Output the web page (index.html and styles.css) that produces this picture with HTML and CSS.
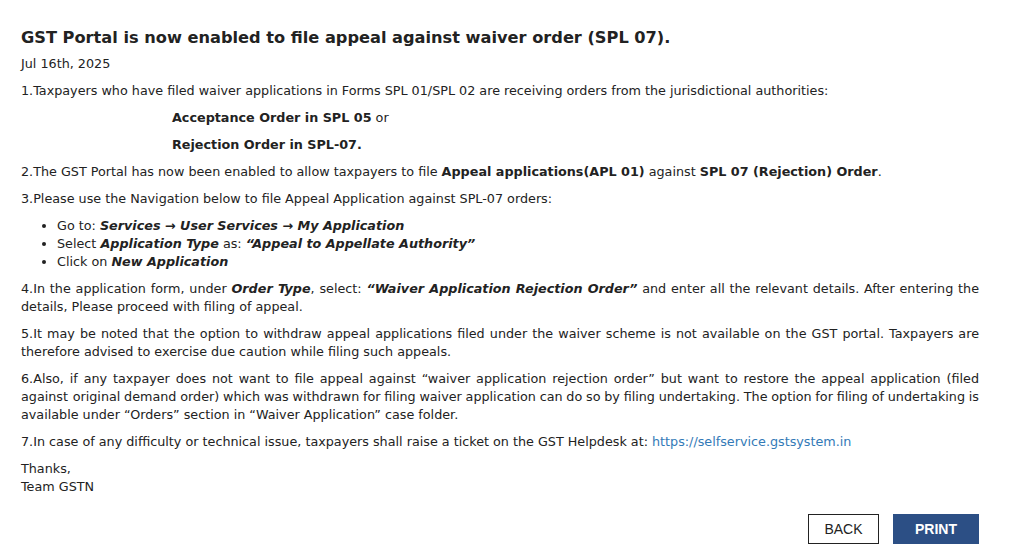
FILE: index.html
```html
<!DOCTYPE html>
<html lang="en">

<head>
  <meta charset="UTF-8">
  <meta name="viewport" content="width=device-width, initial-scale=1.0">
  <title>GST Portal - News</title>
  <link rel="stylesheet" href="styles.css">
</head>

<body>
  <div class="container">
    <h1 class="news-title">GST Portal is now enabled to file appeal against waiver order (SPL 07).</h1>
    <p class="news-date">Jul 16th, 2025</p>

    <div class="news-body">
      <p>1.Taxpayers who have filed waiver applications in Forms SPL 01/SPL 02 are receiving orders from the jurisdictional authorities:</p>
      <p class="indent"><b>Acceptance Order in SPL 05</b> or</p>
      <p class="indent"><b>Rejection Order in SPL-07.</b></p>
      <p>2.The GST Portal has now been enabled to allow taxpayers to file <b>Appeal applications(APL 01)</b> against <b>SPL 07 (Rejection) Order</b>.</p>
      <p>3.Please use the Navigation below to file Appeal Application against SPL-07 orders:</p>
      <ul class="steps">
        <li>Go to: <b><i>Services → User Services → My Application</i></b></li>
        <li>Select <b><i>Application Type</i></b> as: <b><i>“Appeal to Appellate Authority”</i></b></li>
        <li>Click on <b><i>New Application</i></b></li>
      </ul>
      <p class="justify">4.In the application form, under <b><i>Order Type</i></b>, select: <b><i>“Waiver Application Rejection Order”</i></b> and enter all the relevant details. After entering the details, Please proceed with filing of appeal.</p>
      <p class="justify">5.It may be noted that the option to withdraw appeal applications filed under the waiver scheme is not available on the GST portal. Taxpayers are therefore advised to exercise due caution while filing such appeals.</p>
      <p class="justify">6.Also, if any taxpayer does not want to file appeal against “waiver application rejection order” but want to restore the appeal application (filed against <span class="tight">original demand order) which was withdrawn for filing waiver application can do so by filing undertaking. The option for filing of undertaking is</span> available under “Orders” section in “Waiver Application” case folder.</p>
      <p>7.In case of any difficulty or technical issue, taxpayers shall raise a ticket on the GST Helpdesk at: <a href="#" class="link">https://selfservice.gstsystem.in</a></p>
      <p>Thanks,<br>Team GSTN</p>
    </div>

    <div class="actions">
      <button type="button" class="btn btn-back">BACK</button>
      <button type="button" class="btn btn-print">PRINT</button>
    </div>
  </div>
</body>

</html>
```

FILE: styles.css
```css
body {
  margin: 0;
  padding: 0;
  background-color: #fff;
  color: #222;
  font-family: Tahoma, "DejaVu Sans", sans-serif;
  font-size: 12.75px;
  line-height: 18px;
}

.container {
  width: 958px;
  padding: 0 0 0 21px;
}

.news-title {
  font-size: 16.2px;
  font-weight: bold;
  line-height: 24px;
  margin: 26px 0 5px 0;
}

.news-date {
  margin: 0 0 9px 0;
}

.news-body p {
  margin: 0 0 9px 0;
}

.news-body .indent {
  padding-left: 151px;
}

.news-body .justify {
  text-align: justify;
}

.news-body .tight {
  word-spacing: -0.9px;
}

.steps {
  margin: 0 0 9px 0;
  padding-left: 36px;
}

.link {
  color: #337ab7;
  text-decoration: none;
}

.actions {
  display: flex;
  justify-content: flex-end;
  gap: 14px;
  margin-top: 18px;
}

.btn {
  font-family: "Liberation Sans", Arial, sans-serif;
  font-size: 14px;
  height: 30px;
  cursor: pointer;
}

.btn-back {
  width: 71px;
  background-color: #fff;
  color: #222;
  border: 1px solid #222;
}

.btn-print {
  width: 86px;
  background-color: #2c4f85;
  color: #fff;
  border: none;
  font-weight: bold;
}
```
